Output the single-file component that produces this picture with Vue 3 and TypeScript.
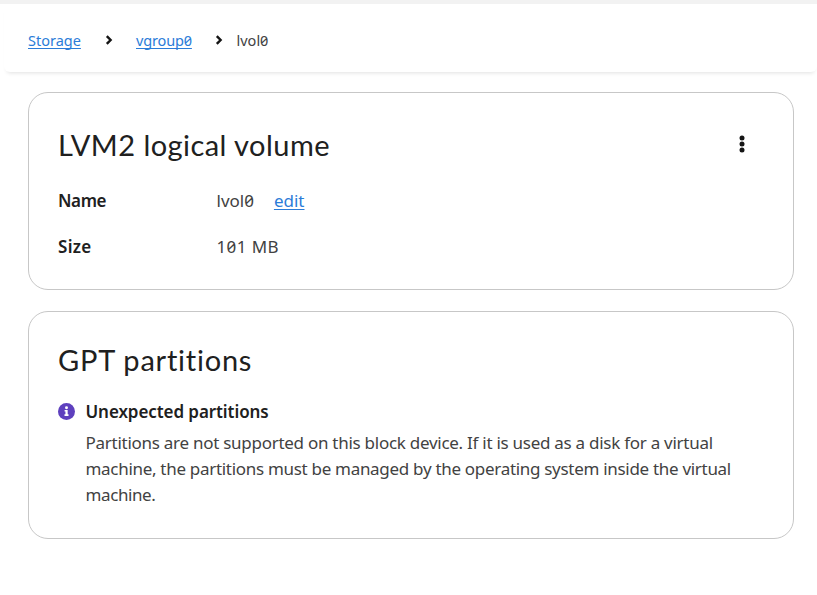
<script setup lang="ts">
interface Crumb {
  label: string
  width: string
}

const crumbs: Crumb[] = [
  { label: 'Storage', width: 'storage' },
  { label: 'vgroup0', width: 'group' },
]

const description: string[] = [
  'Partitions are not supported on this block device. If it is used as a disk for a virtual',
  'machine, the partitions must be managed by the operating system inside the virtual',
  'machine.',
]
</script>

<template>
  <div class="page">
    <header class="masthead">
      <nav class="breadcrumb" aria-label="Breadcrumb">
        <template v-for="crumb in crumbs" :key="crumb.label">
          <span :class="['crumb', crumb.width]"><a href="#">{{ crumb.label }}</a></span>
          <svg class="chevron" viewBox="0 0 8 10" aria-hidden="true">
            <path d="M1.8 1.2 5.6 5 1.8 8.8" />
          </svg>
        </template>
        <span class="current">lvol0</span>
      </nav>
    </header>

    <main class="content">
      <section class="card volume">
        <div class="card-head">
          <h1 class="title-volume">LVM2 logical volume</h1>
          <button class="kebab" type="button" aria-label="Actions">
            <svg viewBox="0 0 6 18" aria-hidden="true">
              <circle cx="3" cy="3" r="2.5" />
              <circle cx="3" cy="9" r="2.5" />
              <circle cx="3" cy="15" r="2.5" />
            </svg>
          </button>
        </div>
        <dl class="details">
          <dt class="name-label">Name</dt>
          <dd><span class="name-value">lvol0</span><a class="edit" href="#">edit</a></dd>
          <dt class="size-label">Size</dt>
          <dd><span class="size-value">101 MB</span></dd>
        </dl>
      </section>

      <section class="card partitions">
        <h1 class="title-gpt">GPT partitions</h1>
        <div class="alert">
          <svg class="info" viewBox="0 0 16 16" aria-hidden="true">
            <circle cx="8" cy="8" r="8" fill="#5e40be" />
            <circle cx="8" cy="4.4" r="1.4" fill="#fff" />
            <path d="M6.2 6.7h2.9v4h.8v1.5H6.1v-1.5h.9V8.1h-.8z" fill="#fff" />
          </svg>
          <div>
            <h2>Unexpected partitions</h2>
            <p><span v-for="(line, i) in description" :key="line" :class="'line-' + i">{{ line }}</span></p>
          </div>
        </div>
      </section>
    </main>
  </div>
</template>

<style>
body {
  margin: 0;
  background: #fff;
}
</style>

<style scoped>
.page {
  box-sizing: border-box;
  width: 817px;
  height: 595px;
  overflow: hidden;
  border-top: 4px solid #f2f2f2;
  font-family: 'Noto Sans', sans-serif;
  font-feature-settings: 'zero' 1;
  font-size: 17px;
  line-height: 26px;
  color: #424242;
}

a {
  color: #2b7cd8;
  text-decoration: underline;
  text-decoration-thickness: 1px;
  text-underline-offset: 2px;
  text-decoration-skip-ink: none;
}

.masthead {
  box-sizing: border-box;
  height: 68px;
  margin: 0 0 0 4px;
  padding: 25px 24px 0;
  border-radius: 6px;
  box-shadow: 0 4px 4px -3px rgba(0, 0, 0, 0.12);
}

.breadcrumb {
  display: flex;
  align-items: center;
  height: 22px;
  font-size: 14.5px;
  line-height: 22px;
}

.chevron {
  width: 8px;
  height: 10px;
  fill: none;
  stroke: #151515;
  stroke-width: 2.4;
}

.crumb.storage {
  width: 77px;
}

.crumb.group {
  width: 79px;
  letter-spacing: -0.15px;
}

.chevron + .crumb {
  margin-left: 23px;
}

.current {
  margin-left: 13.5px;
}

.content {
  display: flex;
  flex-direction: column;
  gap: 21px;
  padding: 20px 23px 0 28px;
}

.card {
  box-sizing: border-box;
  border: 1px solid #c7c7c7;
  border-radius: 20px;
  padding: 34px 29px 0;
}

.volume {
  height: 198px;
}

.partitions {
  height: 228px;
  padding-top: 30px;
}

.card-head {
  display: flex;
  justify-content: space-between;
  align-items: center;
}

h1 {
  margin: 0;
  font-family: Lato, sans-serif;
  font-weight: 400;
  font-size: 29px;
  line-height: 36px;
  font-variant-ligatures: none;
  color: #202020;
}

.title-volume {
  letter-spacing: 0.45px;
}

.title-gpt {
  letter-spacing: 0.77px;
}

.kebab {
  display: flex;
  margin: 0 19px 2px 0;
  padding: 0;
  border: 0;
  background: none;
}

.kebab svg {
  width: 6px;
  height: 18px;
  fill: #151515;
}

.details {
  display: grid;
  grid-template-columns: 158.5px 1fr;
  row-gap: 20px;
  margin: 25px 0 0;
}

dt,
h2 {
  font-weight: 600;
  color: #202020;
}

.name-label {
  letter-spacing: -0.4px;
}

.size-label {
  letter-spacing: 0.3px;
}

dd {
  margin: 0;
}

.size-value {
  letter-spacing: 0.4px;
}

.edit {
  margin-left: 20px;
}

.alert {
  display: flex;
  gap: 10.5px;
  margin-top: 21px;
}

.info {
  flex: none;
  width: 17px;
  height: 17px;
  margin-top: 4px;
}

h2 {
  margin: 0;
  font-size: 17px;
  line-height: 26px;
  letter-spacing: -0.08px;
}

p {
  margin: 5px 0 0;
}

p span {
  display: block;
  width: max-content;
}

.line-0 {
  letter-spacing: -0.27px;
}

.line-1 {
  letter-spacing: -0.3px;
}

.line-2 {
  letter-spacing: -0.4px;
}
</style>
